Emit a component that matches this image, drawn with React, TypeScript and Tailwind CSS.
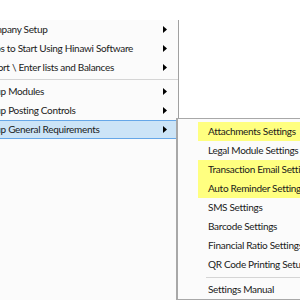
import React from "react";

const Arrow = () => (
  <svg width="4" height="7" viewBox="0 0 4 7" className="block">
    <path d="M0 0 L4 3.5 L0 7 Z" fill="#000" />
  </svg>
);

const mainItems: { label: string; sep?: boolean; active?: boolean }[] = [
  { label: "Company Setup" },
  { label: "Steps to Start Using Hinawi Software" },
  { label: "Import \\ Enter lists and Balances", sep: true },
  { label: "Setup Modules" },
  { label: "Setup Posting Controls" },
  { label: "Setup General Requirements", active: true },
];

const subItems: { label: string; yellow?: boolean; sepBefore?: boolean }[] = [
  { label: "Attachments Settings", yellow: true },
  { label: "Legal Module Settings" },
  { label: "Transaction Email Settings", yellow: true },
  { label: "Auto Reminder Settings", yellow: true },
  { label: "SMS Settings" },
  { label: "Barcode Settings" },
  { label: "Financial Ratio Settings" },
  { label: "QR Code Printing Setup" },
  { label: "Settings Manual", sepBefore: true },
];

export default function App() {
  return (
    <div
      className="relative w-[300px] h-[300px] overflow-hidden bg-white text-[10px] tracking-[-0.3px] text-[#1a1a1a]"
      style={{ fontFamily: "Lato, 'Liberation Sans', sans-serif" }}
    >
      {/* main menu */}
      <div className="absolute left-[-26px] top-[20px] w-[205px] h-[320px] bg-[#fbfbfb] border-r border-[#a0a0a0]">
        {mainItems.map((it, i) => (
          <React.Fragment key={i}>
            <div
              className={
                "h-[19px] mr-[1px] flex items-center " +
                (it.active ? "bg-[#cce4f7] border border-[#66a7e8]" : "border border-transparent")
              }
            >
              <span className="pl-[7px] flex-1 whitespace-nowrap">{it.label}</span>
              <span className="pr-[9px]">
                <Arrow />
              </span>
            </div>
            {it.sep && (
              <div className="h-[5px] flex items-center">
                <div className="h-px w-full bg-[#d5d5d5]" />
              </div>
            )}
          </React.Fragment>
        ))}
      </div>

      {/* sub menu */}
      <div className="absolute left-[176px] top-[118px] w-[150px] h-[182px] bg-[#fbfbfb] border-l-2 border-t border-b border-[#a8a8a8] pt-[3px]">
        {subItems.map((it, i) => (
          <React.Fragment key={i}>
            {it.sepBefore && (
              <div className="h-[6px] flex items-center pl-[28px]">
                <div className="h-px w-full bg-[#d5d5d5]" />
              </div>
            )}
            <div className="h-[19px] pl-[20px] flex">
              <div
                className={
                  "flex-1 flex items-center pl-[10px] whitespace-nowrap " +
                  (it.yellow ? "bg-[#ffff80]" : "")
                }
              >
                {it.label}
              </div>
            </div>
          </React.Fragment>
        ))}
      </div>
    </div>
  );
}
